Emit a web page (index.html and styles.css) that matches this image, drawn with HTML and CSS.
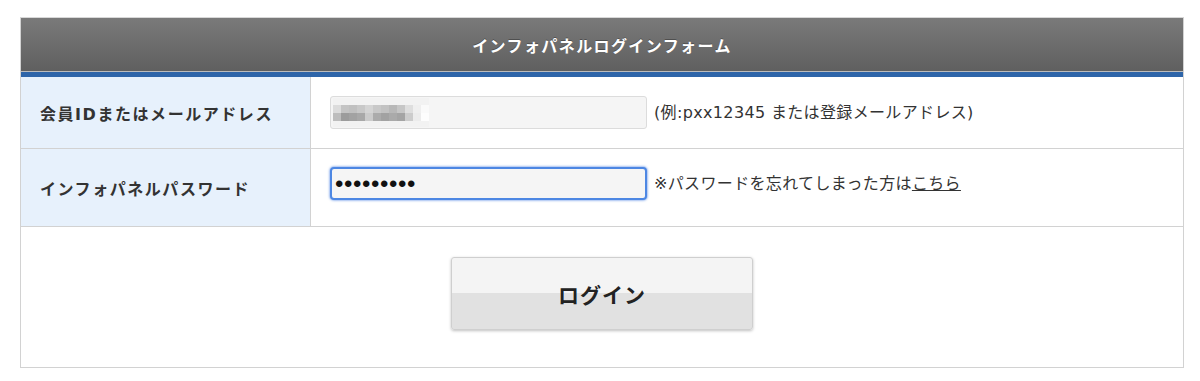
FILE: index.html
```html
<!DOCTYPE html>
<html lang="ja">
<head>
<meta charset="utf-8">
<title>インフォパネルログインフォーム</title>
<link rel="stylesheet" href="styles.css">
</head>
<body>
<div class="panel">
  <div class="panel-head">インフォパネルログインフォーム</div>
  <div class="panel-accent"></div>
  <div class="row row-id">
    <div class="label">会員IDまたはメールアドレス</div>
    <div class="value">
      <div class="field">
        <svg class="blur" width="96" height="29" viewBox="0 0 96 29" aria-hidden="true">
          <rect x="0" y="0" width="96" height="29" fill="#f2f2f2"/>
          <rect x="0" y="7" width="8" height="8" fill="#dcdcdc"/>
          <rect x="8" y="7" width="8" height="8" fill="#c4c4c4"/>
          <rect x="16" y="7" width="8" height="8" fill="#c0c0c0"/>
          <rect x="24" y="7" width="8" height="8" fill="#c8c8c8"/>
          <rect x="32" y="7" width="8" height="8" fill="#d4d4d4"/>
          <rect x="40" y="7" width="8" height="8" fill="#c8c8c8"/>
          <rect x="48" y="7" width="8" height="8" fill="#c2c2c2"/>
          <rect x="56" y="7" width="8" height="8" fill="#b8b8b8"/>
          <rect x="64" y="7" width="8" height="8" fill="#c6c6c6"/>
          <rect x="72" y="7" width="8" height="8" fill="#dedede"/>
          <rect x="80" y="7" width="8" height="8" fill="#efefef"/>
          <rect x="88" y="7" width="8" height="8" fill="#fafafa"/>
          <rect x="0" y="15" width="8" height="8" fill="#bdbdbd"/>
          <rect x="8" y="15" width="8" height="8" fill="#9c9c9c"/>
          <rect x="16" y="15" width="8" height="8" fill="#a2a2a2"/>
          <rect x="24" y="15" width="8" height="8" fill="#a8a8a8"/>
          <rect x="32" y="15" width="8" height="8" fill="#cbcbcb"/>
          <rect x="40" y="15" width="8" height="8" fill="#ababab"/>
          <rect x="48" y="15" width="8" height="8" fill="#a2a2a2"/>
          <rect x="56" y="15" width="8" height="8" fill="#aaaaaa"/>
          <rect x="64" y="15" width="8" height="8" fill="#a4a4a4"/>
          <rect x="72" y="15" width="8" height="8" fill="#cccccc"/>
          <rect x="80" y="15" width="8" height="8" fill="#ececec"/>
          <rect x="88" y="15" width="8" height="8" fill="#fdfdfd"/>
        </svg>
      </div>
      <span class="hint">(例:pxx12345 または登録メールアドレス)</span>
    </div>
  </div>
  <div class="row row-pw">
    <div class="label">インフォパネルパスワード</div>
    <div class="value">
      <div class="field field-focus"><span class="dots">•••••••••</span></div>
      <span class="hint">※パスワードを忘れてしまった方は<a class="link" href="#">こちら</a></span>
    </div>
  </div>
  <div class="actions">
    <button class="btn" type="button">ログイン</button>
  </div>
</div>
</body>
</html>
```

FILE: styles.css
```css
html, body {
  margin: 0;
  padding: 0;
  background: #ffffff;
}
body {
  font-family: "Noto Sans CJK JP", "Noto Sans", sans-serif;
  color: #333333;
}
.panel {
  box-sizing: border-box;
  width: 1164px;
  margin: 17px 0 0 20px;
  border: 1px solid #d2d2d2;
  border-top-color: #d8d8d8;
}
.panel-head {
  height: 53px;
  background: linear-gradient(#7a7a7a, #5f5f5f);
  border-bottom: 1px solid #bcbcbc;
  color: #ffffff;
  font-weight: 700;
  font-size: 16px;
  letter-spacing: 1.4px;
  display: flex;
  align-items: center;
  justify-content: center;
  text-shadow: 0 -1px 0 rgba(0,0,0,0.3);
}
.panel-accent {
  height: 5px;
  background: #2e65a9;
}
.row {
  display: flex;
  border-bottom: 1px solid #d2d2d2;
}
.row-id { height: 71px; }
.row-pw { height: 77px; }
.label {
  box-sizing: border-box;
  width: 290px;
  flex: none;
  background: #e7f1fc;
  border-right: 1px solid #d2d2d2;
  padding-left: 19px;
  display: flex;
  align-items: center;
  font-family: "DejaVu Sans", "Noto Sans CJK JP", sans-serif;
  font-weight: 700;
  font-size: 16px;
  letter-spacing: 1.55px;
  color: #333333;
}
.value {
  display: flex;
  align-items: flex-start;
  padding: 19px 0 0 19px;
  gap: 7px;
}
.row-pw .value { padding-top: 18px; }
.field {
  box-sizing: border-box;
  width: 317px;
  height: 33px;
  background: #f5f5f5;
  border: 1px solid #dcdcdc;
  border-radius: 3px;
  display: flex;
  align-items: center;
  padding-left: 2px;
}
.blur { display: block; }
.field-focus {
  border: 2px solid #4d87e3;
  border-radius: 4px;
  box-shadow: 0 0 2px 1px rgba(90, 140, 230, 0.55);
  padding-left: 3px;
}
.dots {
  font-family: "Liberation Sans", sans-serif;
  font-size: 24px;
  letter-spacing: 0.6px;
  color: #111111;
  line-height: 1;
}
.hint {
  font-family: "DejaVu Sans", "Noto Sans CJK JP", sans-serif;
  font-size: 16px;
  letter-spacing: 0.35px;
  line-height: 33px;
  color: #333333;
  white-space: nowrap;
}
.link {
  color: #333333;
  text-decoration: underline;
}
.actions {
  height: 140px;
  display: flex;
  justify-content: center;
  align-items: flex-start;
  padding-top: 30px;
  box-sizing: border-box;
}
.btn {
  width: 302px;
  height: 73px;
  border: 1px solid #cfcfcf;
  border-radius: 3px;
  background: linear-gradient(#f4f4f4 0, #f4f4f4 50%, #e1e1e1 50%, #e1e1e1 100%);
  box-shadow: 0 1px 3px rgba(0,0,0,0.25);
  font-family: "Noto Sans CJK JP", sans-serif;
  font-weight: 700;
  font-size: 21px;
  letter-spacing: 1px;
  color: #222222;
  cursor: pointer;
}
```
